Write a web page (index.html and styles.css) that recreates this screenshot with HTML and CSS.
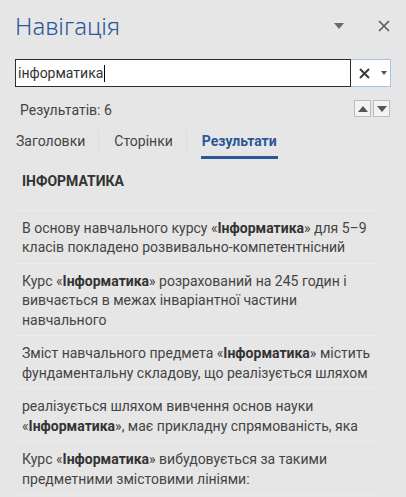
FILE: index.html
```html
<!DOCTYPE html>
<html lang="uk">
<head>
<meta charset="utf-8">
<title>Навігація</title>
<link rel="stylesheet" href="styles.css">
</head>
<body>
<div class="pane">
  <header class="head">
    <h1 class="title">Навігація</h1>
    <div class="head-icons">
      <svg class="menu-tri" width="10" height="6" viewBox="0 0 10 6"><path d="M0 0H10L5 6Z" fill="#6a6a6a"/></svg>
      <svg class="close" width="12" height="12" viewBox="0 0 12 12"><path d="M1 1L11 11M11 1L1 11" stroke="#5a5a5a" stroke-width="1.6"/></svg>
    </div>
  </header>

  <div class="search">
    <div class="search-input"><span class="query">інформатика</span><span class="caret"></span></div>
    <div class="search-btns">
      <svg class="clear" width="11" height="11" viewBox="0 0 11 11"><path d="M1 1L10 10M10 1L1 10" stroke="#3c3c3c" stroke-width="2"/></svg>
      <svg class="drop" width="6" height="4" viewBox="0 0 6 4"><path d="M0 0H6L3 4Z" fill="#555"/></svg>
    </div>
  </div>

  <div class="count-row">
    <span class="count">Результатів: 6</span>
    <div class="arrows">
      <span class="arrow"><svg width="10" height="6" viewBox="0 0 10 6"><path d="M0 6H10L5 0Z" fill="#555"/></svg></span>
      <span class="arrow"><svg width="10" height="6" viewBox="0 0 10 6"><path d="M0 0H10L5 6Z" fill="#555"/></svg></span>
    </div>
  </div>

  <nav class="tabs">
    <span class="tab">Заголовки</span>
    <span class="tab-sep"></span>
    <span class="tab">Сторінки</span>
    <span class="tab-sep"></span>
    <span class="tab active">Результати</span>
  </nav>

  <ul class="results">
    <li class="item heading">ІНФОРМАТИКА</li>
    <li class="item">В основу навчального курсу «<b>Інформатика</b>» для 5–9 класів покладено розвивально-компетентнісний</li>
    <li class="item">Курс «<b>Інформатика</b>» розрахований на 245 годин і вивчається в межах інваріантної частини навчального</li>
    <li class="item">Зміст навчального предмета «<b>Інформатика</b>» містить фундаментальну складову, що реалізується шляхом</li>
    <li class="item">реалізується шляхом вивчення основ науки «<b>Інформатика</b>», має прикладну спрямованість, яка</li>
    <li class="item">Курс «<b>Інформатика</b>» вибудовується за такими предметними змістовими лініями:</li>
  </ul>
</div>
</body>
</html>
```

FILE: styles.css
```css
* { box-sizing: border-box; }
html, body { margin: 0; padding: 0; }
body {
  background: #e6e6e6;
  font-family: Roboto, "Noto Sans", sans-serif;
  color: #444;
}
.pane {
  width: 406px;
  height: 497px;
  overflow: hidden;
  background: #e6e6e6;
}
.head {
  display: flex;
  align-items: center;
  height: 59px;
  padding: 0 16px 9px 15px;
}
.title {
  margin: 0;
  font-family: "Noto Sans", sans-serif;
  font-weight: 300;
  font-size: 24px;
  color: #2b579a;
  flex: 1;
}
.head-icons {
  display: flex;
  align-items: center;
  gap: 34px;
  padding-top: 1px;
}
.search {
  display: flex;
  margin-left: 15px;
  width: 376px;
  height: 28px;
  border: 1px solid #a9c3e6;
  background: #fff;
}
.search-input {
  width: 336px;
  height: 28px;
  margin: -1px 0 -1px -1px;
  border: 1px solid #2d2d2d;
  display: flex;
  align-items: center;
  padding-left: 2px;
  font-size: 14px;
  color: #333;
}
.caret {
  display: inline-block;
  width: 1px;
  height: 17px;
  background: #000;
  margin-left: 1px;
}
.search-btns {
  flex: 1;
  display: flex;
  align-items: center;
  padding-left: 8px;
  gap: 11px;
}
.count-row {
  display: flex;
  align-items: center;
  justify-content: space-between;
  margin-top: 13px;
  height: 17px;
  padding: 0 16px 0 20px;
}
.count {
  font-size: 14px;
  color: #444;
  position: relative;
  top: 1px;
}
.arrows {
  display: flex;
  gap: 2px;
}
.arrow {
  width: 17px;
  height: 17px;
  border: 1px solid #bdbdbd;
  background: #f3f3f3;
  display: flex;
  align-items: center;
  justify-content: center;
}
.tabs {
  display: flex;
  align-items: center;
  padding-left: 16px;
  height: 34px;
  margin-top: 7px;
}
.tab {
  font-size: 14px;
  color: #444;
  position: relative;
  line-height: 22px;
}
.tab-sep {
  width: 1px;
  height: 22px;
  background: #dedede;
  margin: 0 15px 0 13px;
}
.tab.active {
  color: #2b579a;
  font-weight: bold;
}
.tab.active::after {
  content: "";
  position: absolute;
  left: -1px;
  right: -1px;
  bottom: -7px;
  height: 3px;
  background: #2b579a;
}
.results {
  list-style: none;
  margin: 0;
  padding: 0 29px 0 15px;
}
.item {
  padding: 8px 6px 5px 7px;
  font-size: 14px;
  line-height: 19.5px;
  border-bottom: 1px solid #ededed;
}
.item b { color: #333; }
.item.heading {
  font-weight: bold;
  color: #333;
  padding-top: 14px;
  padding-bottom: 18px;
}
```
